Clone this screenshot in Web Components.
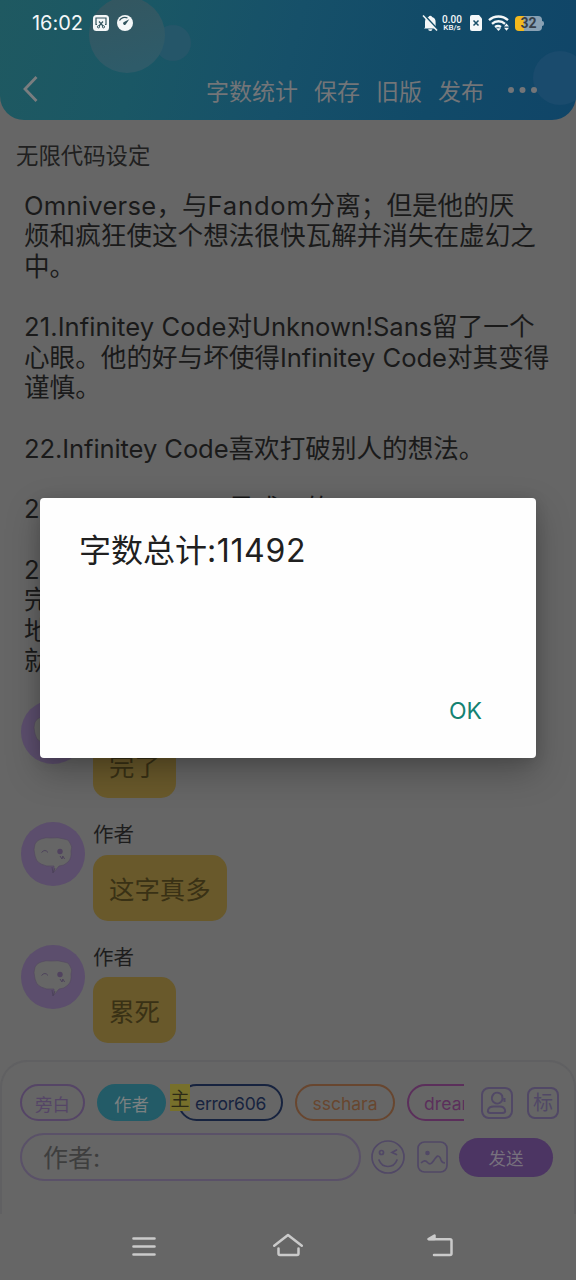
<!DOCTYPE html>
<html lang="zh-CN">
<head>
<meta charset="utf-8">
<title>字数统计</title>
<style>
html,body{margin:0;height:100%;overflow:hidden;background:#666}
body{font-family:Inter,"Noto Sans CJK SC",sans-serif;color:#1b1b1b}
</style>
</head>
<body>
<editor-screen></editor-screen>
<script>
function define(name, html, after) {
  customElements.define(name, class extends HTMLElement {
    constructor() {
      super();
      this.attachShadow({ mode: 'open' });
    }
    connectedCallback() {
      if (!this.shadowRoot.childNodes.length) {
        const t = document.createElement('template');
        t.innerHTML = html;
        this.shadowRoot.append(t.content.cloneNode(true));
      }
      if (after) after(this);
    }
  });
}

/* A run of text whose letter spacing is set so that it fills the width "w". */
define('fit-run', `<style>:host{display:inline-block;white-space:pre}</style><slot></slot>`, el => {
  const w = parseFloat(el.getAttribute('w'));
  const n = [...el.textContent].length;
  el.style.letterSpacing = (w - el.getBoundingClientRect().width) / n + 'px';
});

define('status-bar', `
<style>
:host{display:flex;height:46px;align-items:center;box-sizing:border-box;padding:0 32px;color:#f4f7f8;position:relative}
time{font-size:20px;font-weight:400;line-height:24px;width:61px}
svg{display:block;flex:none}
.speed{width:22px;margin-left:3px;margin-right:6px;font:500 10px/9px Roboto,sans-serif;text-align:center}
.speed b{display:block;font-weight:500;font-size:10px;line-height:9px}
.speed i{display:block;font-style:normal;font-size:8px;line-height:8px}
.bat{width:27px;height:15px;border-radius:4px;background:linear-gradient(90deg,#f4b91d 9px,#89a1b4 9px);margin-left:5px;font:700 13px/15px Roboto,sans-serif;color:#374049;text-align:center;position:relative}
.bat::after{content:"";position:absolute;right:-2px;top:5px;width:2px;height:5px;border-radius:0 2px 2px 0;background:#89a1b4}
.sp{flex:1}
</style>
<time><fit-run w="51">16:02</fit-run></time>
<svg width="40" height="18" viewBox="0 0 40 18"><rect x="0" y="1" width="16" height="16" rx="3.5" fill="#f4f7f8"/><path d="M4 10.5H3V4h10v6.500h-1M6 7.500l4 4.500M10 7.500l-4 4.500" fill="none" stroke="#32545e" stroke-width="1.200"/><circle cx="5.500" cy="12.800" r="1.100" fill="none" stroke="#32545e"/><circle cx="10.500" cy="12.800" r="1.100" fill="none" stroke="#32545e"/><circle cx="32" cy="9" r="8" fill="#f4f7f8"/><path d="M26.500 6.500a6 6 0 0 1 8-2.500" fill="none" stroke="#32545e" stroke-width="1.300"/><path d="M36.300 5.300L33 10a1.500 1.500 0 1 1-2-2z" fill="#32545e"/></svg>
<span class="sp"></span>
<svg style="margin-right:-1px;margin-left:-3px" width="17" height="18" viewBox="0 0 17 18"><path d="M3 13.500V8a5.200 5.200 0 0 1 3.500-5a2 2 0 0 1 3.600 0A5.200 5.200 0 0 1 13.600 8v5.500l1 1H2z" fill="#f4f7f8"/><path d="M6.200 15.300h4.200a2.100 1.700 0 0 1-4.200 0z" fill="#f4f7f8"/><path d="M2 1l14 15" stroke="#15506a" stroke-width="2"/><path d="M1 1.500l14 15" stroke="#f4f7f8" stroke-width="1.500"/></svg>
<div class="speed"><b>0.00</b><i>KB/s</i></div>
<svg width="14" height="18" viewBox="0 0 14 18"><path d="M3 1h7l3 3.500V15a2 2 0 0 1-2 2H3a2 2 0 0 1-2-2V3a2 2 0 0 1 2-2z" fill="#f4f7f8"/><path d="M4.500 6.500l5 5M9.500 6.500l-5 5" stroke="#174d67" stroke-width="1.500"/></svg>
<svg width="22" height="18" viewBox="0 0 22 18" style="margin-left:5px"><g fill="none" stroke="#f4f7f8" stroke-width="2.300"><path d="M1 6.200a14 14 0 0 1 19 0"/><path d="M4 9.800a9.500 9.500 0 0 1 13 0"/><path d="M7 13a5.500 5.500 0 0 1 6 0"/></g><path d="M8 14.200h5L10.500 17z" fill="#f4f7f8"/><path d="M18.500 9.500l2.500 3h-5zM18.500 16.800l2.500-3h-5z" fill="#f4f7f8"/></svg>
<div class="bat" style="margin-right:2px;font-size:14px">32</div>`);

define('app-header', `
<style>
:host{display:block;height:120px;border-radius:0 0 24px 24px;overflow:hidden;position:relative;background:linear-gradient(105deg,#1f5961 0%,#1a5765 25%,#165069 50%,#114a68 75%,#104568 100%)}
.deco{position:absolute;inset:0}
nav{position:relative;height:74px;display:flex;align-items:center;box-sizing:border-box;padding:0 38px 0 22px;color:#737578;font-size:23px;line-height:30px;padding-top:15px;height:74px}
nav span{margin-right:16px;padding-top:2px}
nav .first{margin-left:auto}
nav svg{display:block}
</style>
<svg class="deco" width="576" height="120"><defs>
<linearGradient id="a" x1="0" y1="0" x2="0.300" y2="1"><stop offset="0" stop-color="#34565f"/><stop offset="1" stop-color="#2e5b69"/></linearGradient></defs>
<circle cx="173" cy="43" r="18" fill="#255669"/><circle cx="127" cy="35" r="38" fill="url(#a)"/><circle cx="560" cy="78" r="27" fill="#1a4b6d"/></svg>
<status-bar></status-bar>
<nav><svg width="18" height="28" viewBox="0 0 18 28" style="margin-top:-3px"><path d="M14.500 2L3 14l11.500 12" fill="none" stroke="#7a7d7f" stroke-width="2.800"/></svg>
<span class="first">字数统计</span><span>保存</span><span>旧版</span><span style="margin-right:23px">发布</span>
<svg width="31" height="8" viewBox="0 0 31 8" style="margin-top:-2px"><g fill="#737578"><circle cx="4" cy="4" r="3"/><circle cx="15.500" cy="4" r="3"/><circle cx="27" cy="4" r="3"/></g></svg></nav>`);

define('story-text', `
<style>
:host{display:block;padding:0 16px}
h1{font-weight:400;font-size:22.4px;line-height:30px;margin:0;padding-top:21px;color:#202020}
div{margin:20px 0 0 8px;font-size:25.6px;line-height:30.35px;white-space:pre;color:#1a1a1a;height:484.6px}
p{margin:0;height:30.35px}
</style>
<h1>无限代码设定</h1>
<div><p><fit-run w="132.400">Omniverse</fit-run>，与<fit-run w="102">Fandom</fit-run>分离；但是他的厌</p><p>烦和疯狂使这个想法很快瓦解并消失在虚幻之</p><p>中。</p><p></p><p><fit-run w="202.500">21.Infinitey Code</fit-run>对<fit-run w="180">Unknown!Sans</fit-run>留了一个</p><p>心眼。他的好与坏使得<fit-run w="167">Infinitey Code</fit-run>对其变得</p><p>谨慎。</p><p></p><p><fit-run w="204.500">22.Infinitey Code</fit-run>喜欢打破别人的想法。</p><p></p><p><fit-run w="204.500">23.Infinitey Code</fit-run>是或不的</p><p></p><p>24</p><p>完</p><p>地</p><p>就</p></div>`);

define('chat-message', `
<style>
:host{display:flex;gap:8px;height:122.500px;padding-left:21px;align-items:flex-start}
svg{flex:none;display:block}
.n{font-size:20.500px;line-height:26px;height:32.500px;color:#1d1d1d}
.b{width:max-content;box-sizing:border-box;height:66px;border-radius:15px;background:#69592b;padding:0 16px;font-size:25.400px;line-height:70px;color:#393115}
</style>
<svg width="64" height="64" viewBox="0 0 64 64"><circle cx="32" cy="32" r="32" fill="#5c4e6d"/><path d="M20 17q5-2 10-1q7-1 13 1q5 0 6 4q3 4 1 8q1 7-3 11q-4 4-9 4l-5 6v-6q-8 1-13-2q-5-2-6-8q-2-7 0-12q2-4 6-5z" fill="#666" stroke="#544962" stroke-width=".7"/><path d="M31 45l1 6l2-5" fill="none" stroke="#4a4058" stroke-width=".8"/><path d="M20.500 30.500q3.500-4 6.500 0M39 34l2 3l.8-3l1.800 3" fill="none" stroke="#4d425b" stroke-width="1"/><circle cx="39" cy="29.500" r="2.700" fill="#51435f"/></svg>
<div><div class="n"><slot name="name"></slot></div><div class="b"><slot></slot></div></div>`);

define('name-chip', `
<style>
:host{display:flex;flex:none;box-sizing:border-box;height:37px;border:2px solid;border-radius:19px;align-items:center;justify-content:center;font-size:17.500px;position:relative;white-space:nowrap;padding-top:2px}
::slotted(i){position:absolute;left:-10px;top:-2px;width:20px;height:27px;background:#77702b;color:#2c2a17;font:400 19px/27px "Noto Sans CJK SC",sans-serif;text-align:center}
</style><slot></slot>`);

define('compose-panel', `
<style>
:host{display:block;box-sizing:border-box;height:154px;margin:0 0 0 0;border:2px solid #606062;border-bottom:0;border-radius:27px 27px 0 0;padding:22px 13px 0 18px}
.r{display:flex;align-items:center}
.chips{display:flex;width:444px;padding:4px 0 4px 10px;margin:-4px 0 -4px -10px;overflow:hidden;box-sizing:content-box}
svg{display:block;flex:none}
.in{box-sizing:border-box;width:341px;height:48px;border:2px solid #5a5168;border-radius:24px;font-size:25px;line-height:47px;padding-left:21px;color:#3e3e3e}
.send{width:94px;height:39px;border-radius:20px;background:#4c3563;color:#77717d;font-size:17.500px;line-height:41px;text-align:center;margin-left:11px}
.sq{width:32px;height:32px;box-sizing:border-box;border:2px solid #514866;border-radius:8px;color:#514866;font-size:20px;line-height:29px;text-align:center;margin-left:14px}
</style>
<div class="r">
<div class="chips">
<name-chip style="width:65px;color:#554566">旁白</name-chip>
<name-chip style="width:69px;margin-left:12px;background:#235b67;border-color:#235b67;color:#7b8182">作者</name-chip>
<name-chip style="width:105px;margin-left:12px;color:#17233f"><fit-run w="71">error606</fit-run><i>主</i></name-chip>
<name-chip style="width:100px;margin-left:12px;color:#68462f"><fit-run w="65">sschara</fit-run></name-chip>
<name-chip style="width:100px;margin-left:12px;color:#5b2f5b;justify-content:flex-start;box-sizing:border-box;padding-left:15px"><fit-run w="53">dream</fit-run></name-chip>
</div>
<svg style="margin-left:17px" width="32" height="32" viewBox="0 0 32 32" fill="none" stroke="#514866" stroke-width="2"><rect x="1" y="1" width="30" height="30" rx="7"/><path d="M18.500 6.200a5.400 5.400 0 1 0 1.800 8.500q2-2.500.7-6.200q-1-2-2.500-2.300zM23.500 11v4"/><path d="M12.500 19.500h6.500q4 0 5 3.500q.8 3-2.500 3h-12q-3.200 0-2.500-3q1-3.500 5.500-3.500z"/></svg>
<div class="sq">标</div>
</div>
<div class="r" style="margin-top:12px">
<div class="in">作者:</div>
<svg style="margin-left:10px" width="34" height="34" viewBox="0 0 34 34" fill="none" stroke="#514866" stroke-width="1.700"><circle cx="17" cy="17" r="16"/><circle cx="10.500" cy="12.500" r="2"/><path d="M25.500 10l-4.500 2.500l4.500 2M8 20q2.500 6.500 9 6.500t9-6.500" stroke-linecap="round"/></svg>
<svg style="margin-left:12px" width="31" height="32" viewBox="0 0 31 32" fill="none" stroke="#514866" stroke-width="1.700"><rect x="1" y="1" width="29" height="30" rx="6.500"/><circle cx="10.500" cy="12" r="2.300" fill="#514866" stroke="none"/><path d="M4 22q4-4 6.500-.5q3 3 5.500-1t4.500-5.500q2.500 0 3.500 4q1 3 4 3"/></svg>
<div class="send">发送</div>
</div>`);

define('system-nav', `
<style>:host{display:flex;height:64px;align-items:center;justify-content:space-between;padding:0 122px 0 131px}svg{display:block}</style>
<svg width="26" height="26" viewBox="0 0 26 26"><path d="M2.500 5.500h21M2.500 13.500h21M2.500 21.500h21" stroke="#cacaca" stroke-width="2.600" stroke-linecap="round"/></svg>
<svg style="margin-left:-8px" width="32" height="26" viewBox="0 0 32 26" fill="none" stroke="#cacaca" stroke-width="2.500" stroke-linecap="round" stroke-linejoin="round"><path d="M2.200 12.800L16 2l13.800 10.800M6.500 15.500v5q0 1.500 1.500 1.500h17q1.500 0 1.500-1.500v-5"/></svg>
<svg width="28" height="26" viewBox="0 0 28 26" fill="none" stroke="#cacaca" stroke-width="2.500" stroke-linejoin="round" stroke-linecap="round"><path d="M3 6.300h21q1.500 0 1.500 1.500v12.700q0 1.500-1.500 1.500H8"/><path d="M2.500 6l6-3.500v3.500z" fill="#cacaca"/></svg>`);

define('alert-dialog', `
<style>
:host{position:absolute;left:40px;top:498px;width:496px;height:260px;box-sizing:border-box;background:#fefefe;border-radius:4px;box-shadow:0 14px 34px rgba(0,0,0,.26),0 2px 14px rgba(0,0,0,.12);display:flex;flex-direction:column;justify-content:space-between;padding:31px 54px 29px 39px}
h2{margin:0;font-weight:400;font-size:32px;line-height:44px;color:#202020}
button{all:unset;align-self:flex-end;font-size:23px;line-height:36px;color:#148272}
</style>
<h2><slot></slot></h2><button><fit-run w="33">OK</fit-run></button>`);

define('editor-screen', `
<style>
:host{display:flex;flex-direction:column;width:576px;height:1280px;position:relative;overflow:hidden;background:#666}
chat-message{flex:none}
main{height:940px;overflow:hidden;flex:none}
</style>
<app-header></app-header>
<main><story-text></story-text>
<div style="margin-top:24px">
<chat-message><span slot="name">作者</span>完了</chat-message>
<chat-message><span slot="name">作者</span>这字真多</chat-message>
<chat-message><span slot="name">作者</span>累死</chat-message>
</div></main>
<compose-panel></compose-panel>
<system-nav></system-nav>
<alert-dialog>字数总计<fit-run w="99">:11492</fit-run></alert-dialog>`);
</script>
</body>
</html>
